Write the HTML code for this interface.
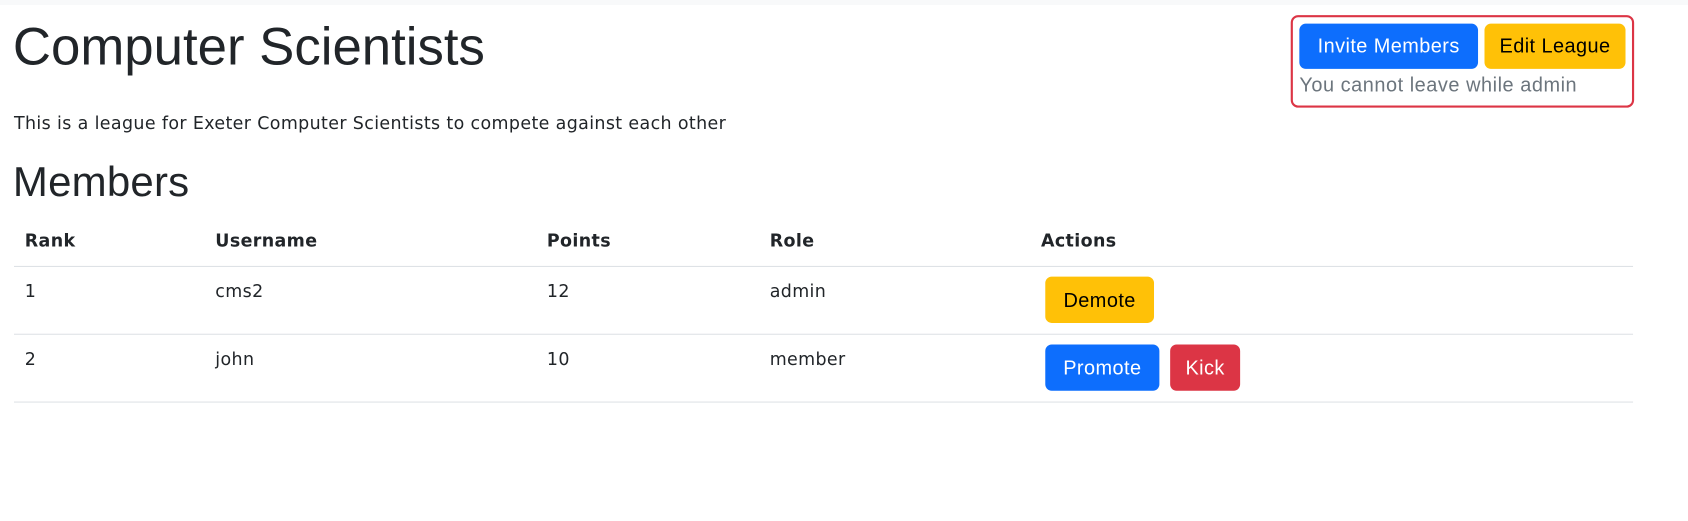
<!DOCTYPE html>
<html><head><meta charset="utf-8"><style>
*{margin:0;padding:0;box-sizing:border-box}
body{width:1688px;height:520px;background:#fff;font-family:"DejaVu Sans","Liberation Sans",sans-serif;color:#212529;position:relative;overflow:hidden}
.top{position:absolute;left:0;top:0;width:1688px;height:5px;background:#f8f9fa}
#w{position:absolute;left:0;top:0;width:1568px;height:484px;transform:scale(1.0765);transform-origin:0 0}
.a{position:absolute;white-space:nowrap}
h1{position:absolute;left:12px;top:16px;font-size:49px;font-weight:400;letter-spacing:0;font-family:"Liberation Sans",sans-serif}
h2{position:absolute;left:12px;top:148px;font-size:39px;font-weight:400;letter-spacing:0.2px;font-family:"Liberation Sans",sans-serif}
.t{font-size:16.2px;line-height:20px;letter-spacing:0.35px}
.th{font-weight:bold}
.line{position:absolute;left:13px;width:1504px;height:1px;background:#dee2e6}
.btn{position:absolute;border-radius:6px;display:flex;align-items:center;justify-content:center;font-family:"Liberation Sans",sans-serif;font-size:18.5px;letter-spacing:0.4px}
.p{background:#0d6efd;color:#fff}.w{background:#ffc107;color:#000}.d{background:#dc3545;color:#fff}
.box{position:absolute;left:1199px;top:14px;width:319px;height:86px;border:2px solid #dc3545;border-radius:7px}
</style></head><body>
<div class="top"></div>
<div id="w">
<h1>Computer Scientists</h1>
<div class="a t" style="left:13px;top:105px">This is a league for Exeter Computer Scientists to compete against each other</div>
<h2>Members</h2>
<div class="a t th" style="left:23px;top:214px">Rank</div>
<div class="a t th" style="left:200px;top:214px">Username</div>
<div class="a t th" style="left:508px;top:214px">Points</div>
<div class="a t th" style="left:715px;top:214px">Role</div>
<div class="a t th" style="left:967px;top:214px">Actions</div>
<div class="line" style="top:247px"></div>
<div class="a t" style="left:23px;top:261px">1</div>
<div class="a t" style="left:200px;top:261px">cms2</div>
<div class="a t" style="left:508px;top:261px">12</div>
<div class="a t" style="left:715px;top:261px">admin</div>
<div class="btn w" style="left:971px;top:257px;width:101px;height:43px">Demote</div>
<div class="line" style="top:310px"></div>
<div class="a t" style="left:23px;top:324px">2</div>
<div class="a t" style="left:200px;top:324px">john</div>
<div class="a t" style="left:508px;top:324px">10</div>
<div class="a t" style="left:715px;top:324px">member</div>
<div class="btn p" style="left:971px;top:320px;width:106px;height:43px">Promote</div>
<div class="btn d" style="left:1087px;top:320px;width:65px;height:43px">Kick</div>
<div class="line" style="top:373px"></div>
<div class="box"></div>
<div class="btn p" style="left:1207px;top:22px;width:166px;height:42px">Invite Members</div>
<div class="btn w" style="left:1379px;top:22px;width:131px;height:42px">Edit League</div>
<div class="a" style="left:1207px;top:68px;font-size:18.5px;letter-spacing:0.5px;color:#6c757d;font-family:'Liberation Sans',sans-serif">You cannot leave while admin</div>
</div>
</body></html>
